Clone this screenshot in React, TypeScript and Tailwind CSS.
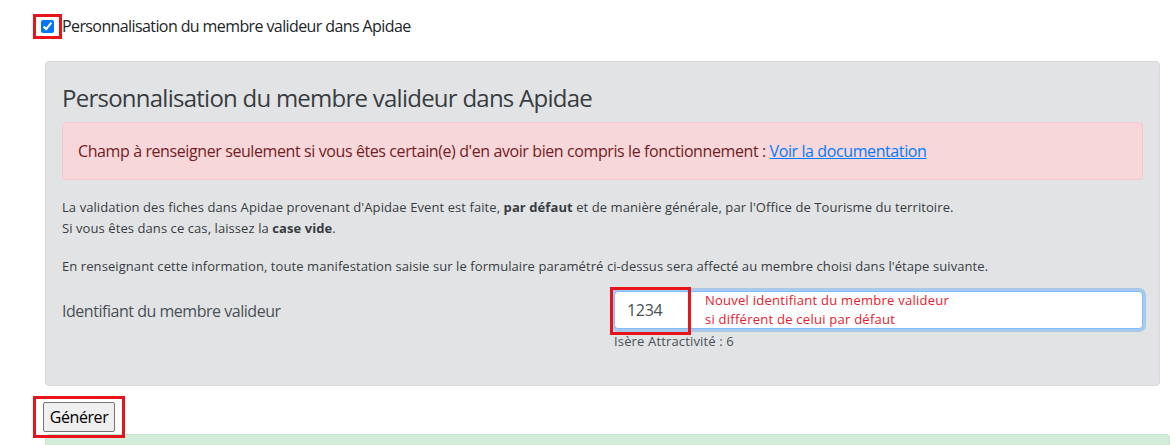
import { useState } from 'react';

const font = { fontFamily: '"Open Sans", "Noto Sans", sans-serif' };

export default function App() {
  const [enabled, setEnabled] = useState(true);
  const [memberId, setMemberId] = useState('1234');

  return (
    <div className="w-[1170px] h-[445px] overflow-hidden bg-white text-[#212529]" style={font}>
      {/* Toggle for the custom validator member */}
      <div className="flex items-center h-[52px] pl-[33px]">
        <div className="flex items-center justify-center w-[29px] h-[25px] border-[3px] border-[#e8141c]">
          <input
            type="checkbox"
            checked={enabled}
            onChange={(e) => setEnabled(e.target.checked)}
            className="w-[13px] h-[13px] accent-[#0075ff]"
          />
        </div>
        <label className="text-[16px] leading-6 tracking-[-0.6px] text-[#212529]">
          Personnalisation du membre valideur dans Apidae
        </label>
      </div>

      <div className="ml-[45px] mr-[10px] mt-[9px] h-[325px] bg-[#e2e3e5] border border-[#d6d8db] rounded-[4px] px-4 pt-[19px]">
        <h3 className="text-[24px] leading-[34px] tracking-[-0.75px] text-[#383d41] mb-[7px]">
          Personnalisation du membre valideur dans Apidae
        </h3>

        <div className="bg-[#f8d7da] border border-[#f5c6cb] rounded-[4px] text-[#721c24] text-[16px] leading-6 tracking-[-0.4px] px-[15px] py-[16px]">
          Champ à renseigner seulement si vous êtes certain(e) d'en avoir bien compris le fonctionnement :{' '}
          <a href="#" className="text-[#007bff] underline">
            Voir la documentation
          </a>
        </div>

        <div className="text-[13px] leading-[21px] tracking-[0.08px] text-[#383d41] mt-[17px]">
          <p>
            La validation des fiches dans Apidae provenant d'Apidae Event est faite, <b>par défaut</b> et de
            manière générale, par l'Office de Tourisme du territoire.
          </p>
          <p>
            Si vous êtes dans ce cas, laissez la <b>case vide</b>.
          </p>
          <p className="mt-[17px]">
            En renseignant cette information, toute manifestation saisie sur le formulaire paramétré ci-dessus
            sera affecté au membre choisi dans l'étape suivante.
          </p>
        </div>

        <div className="flex mt-[14px]">
          <label className="w-[552px] pt-[8px] text-[16px] leading-6 tracking-[-0.47px] text-[#495057]">
            Identifiant du membre valideur
          </label>
          <div className="flex-1">
            <div className="relative h-[38px] bg-white border border-[#80bdff] rounded-[4px] shadow-[0_0_0_3px_rgba(0,123,255,0.25)] flex items-center">
              <input
                value={memberId}
                onChange={(e) => setMemberId(e.target.value)}
                className="w-[80px] pl-[12px] text-[16px] tracking-[-0.3px] text-[#495057] bg-transparent outline-none"
              />
              <div className="absolute left-[90px] -top-[1px] text-[13px] leading-[19px] tracking-[0.25px] text-[#e8192c]">
                <div>Nouvel identifiant du membre valideur</div>
                <div>si différent de celui par défaut</div>
              </div>
              <div className="absolute -left-[5px] -top-[5px] w-[81px] h-[48px] border-[3px] border-[#e8141c] pointer-events-none" />
            </div>
            <div className="text-[13px] leading-5 tracking-[0.15px] text-[#495057] mt-[2px]">Isère Attractivité : 6</div>
          </div>
        </div>
      </div>

      <div className="pl-[33px] mt-[10px]">
        <div className="inline-flex items-center justify-center w-[92px] h-[42px] border-[3px] border-[#e8141c]">
          <button className="h-[30px] w-[72px] bg-[#efefef] border border-[#767676] rounded-[2px] text-[16px] tracking-[-0.4px] text-black">
            Générer
          </button>
        </div>
      </div>

      <div className="ml-[45px] -mt-[4px] h-[40px] bg-[#d4edda] border border-[#c3e6cb] rounded-[4px]" />
    </div>
  );
}
